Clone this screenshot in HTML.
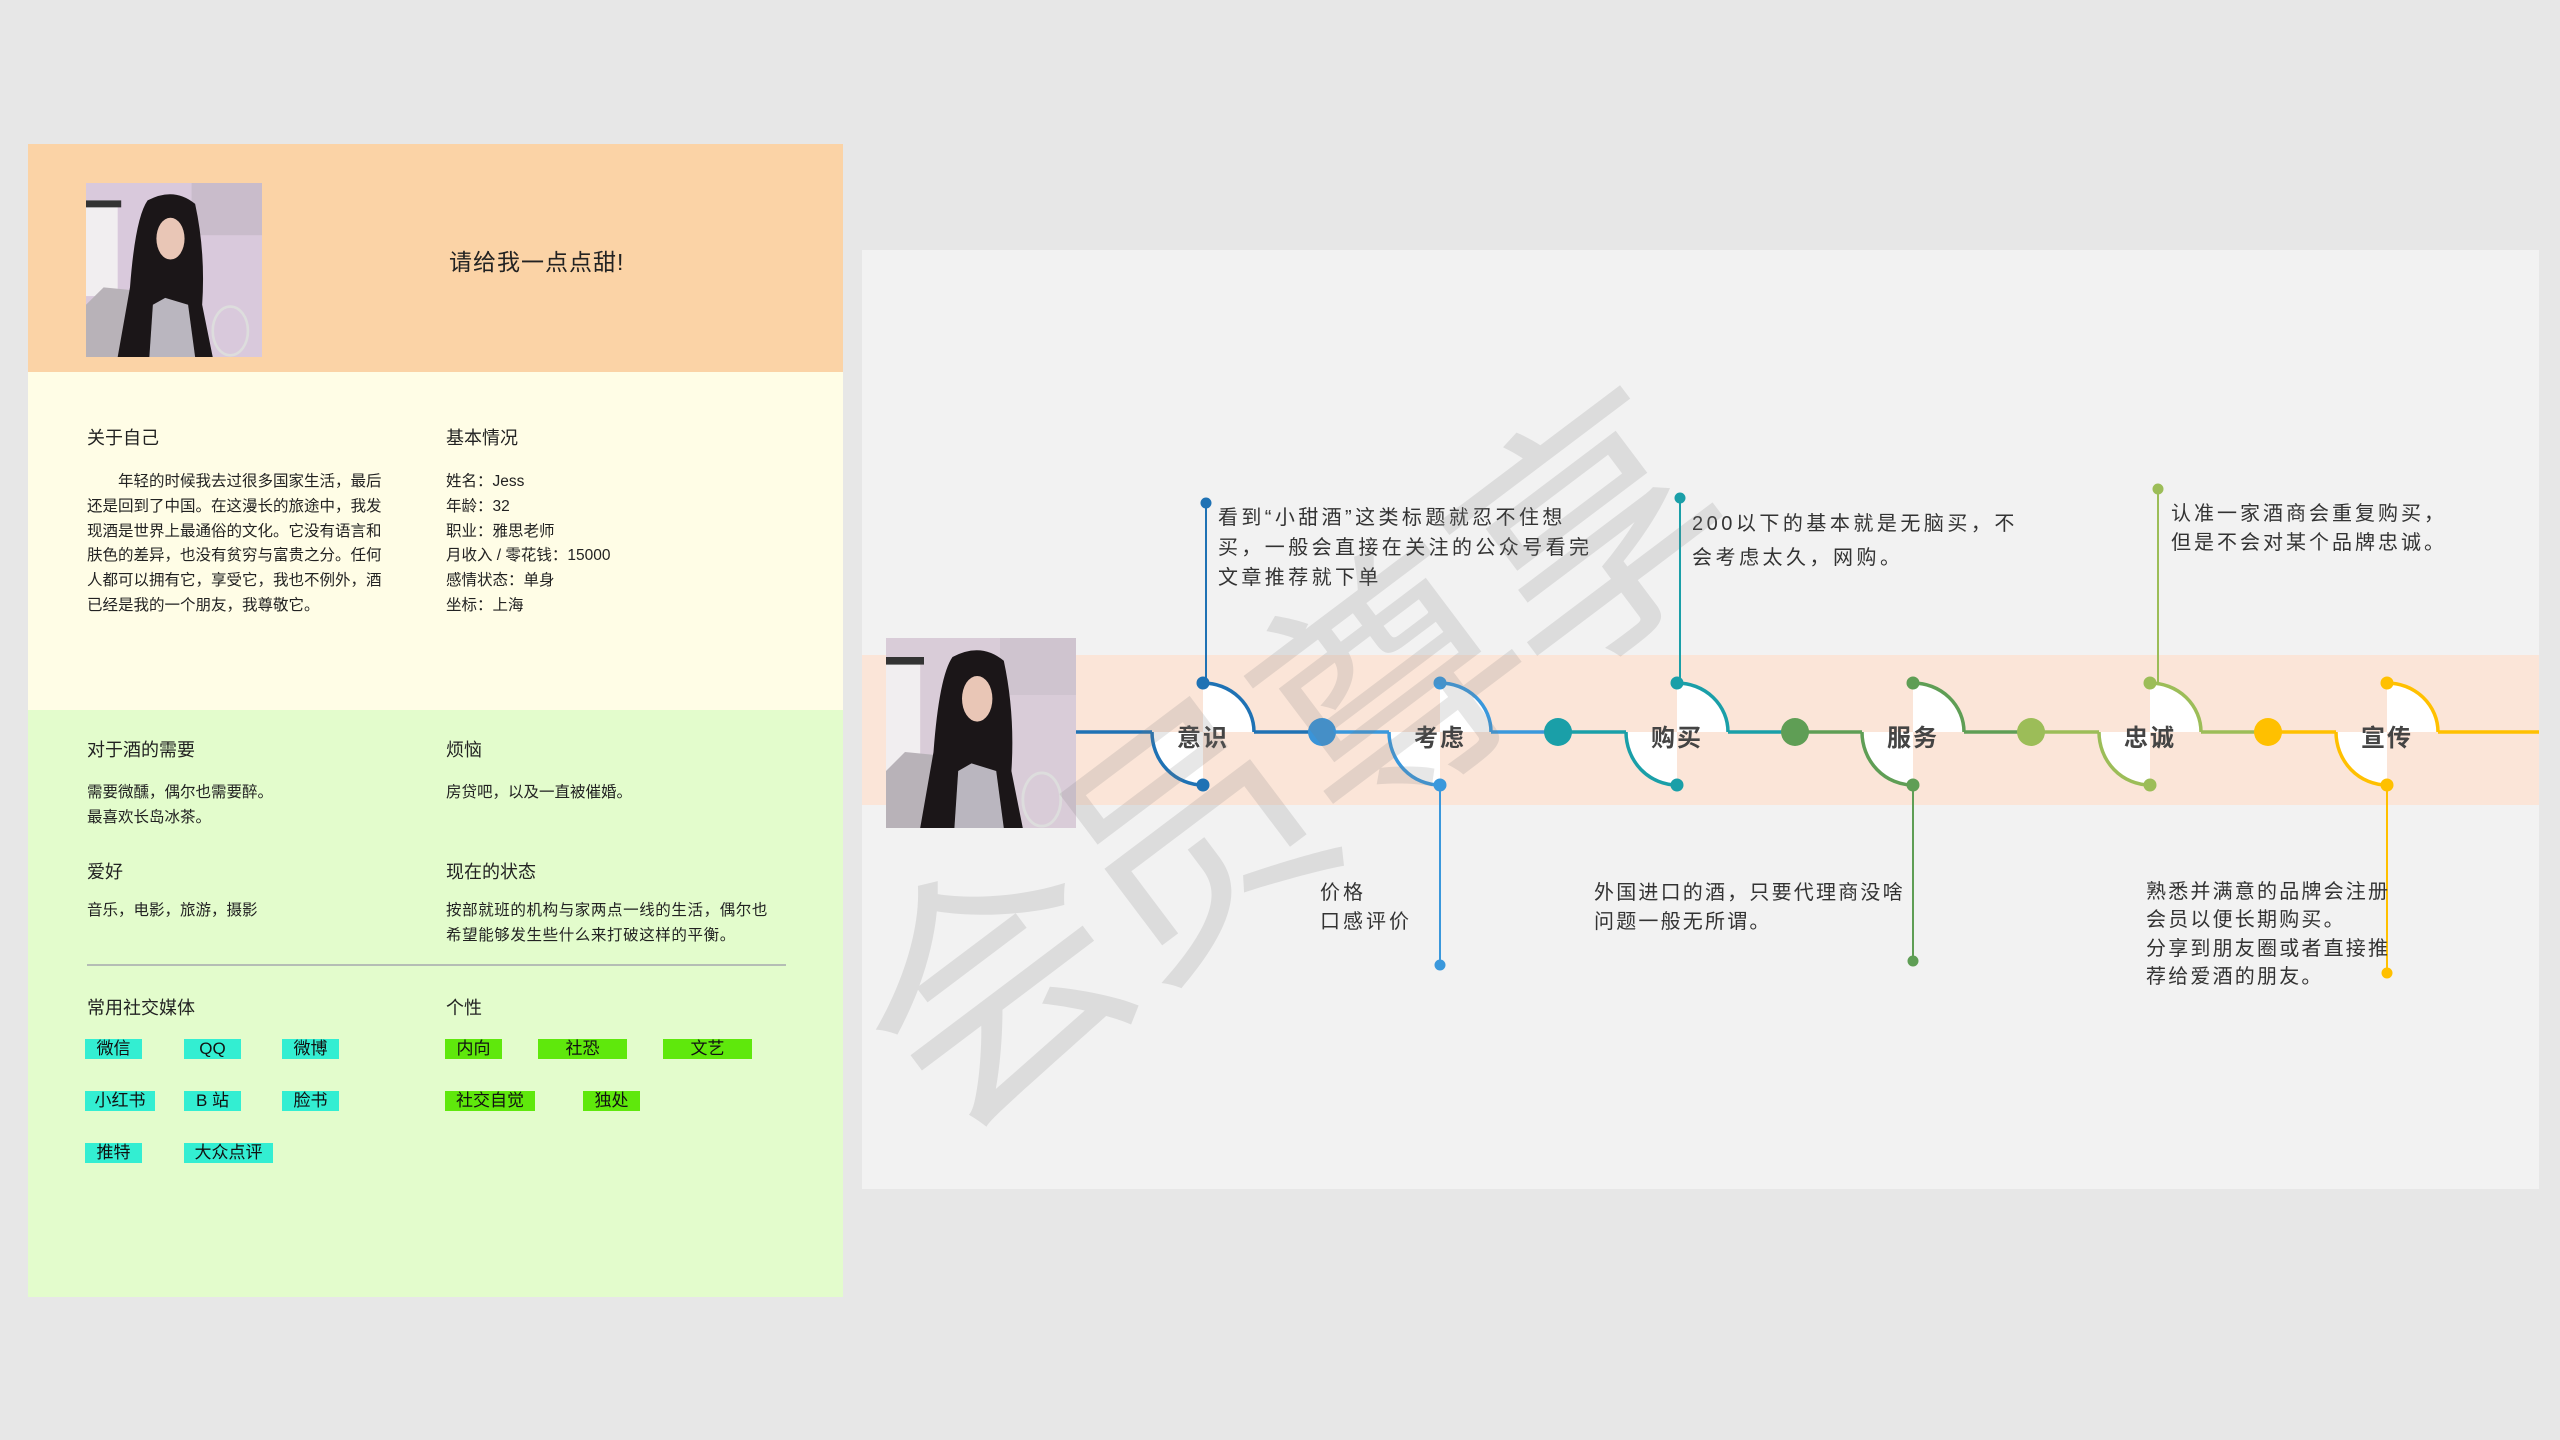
<!DOCTYPE html>
<html><head><meta charset="utf-8"><style>
*{margin:0;padding:0;box-sizing:border-box}
body{width:2560px;height:1440px;background:#e7e7e7;position:relative;overflow:hidden;font-family:"Liberation Sans","Noto Sans CJK SC",sans-serif;color:#222}
.a{position:absolute;white-space:nowrap}
.h{font-size:18px;color:#222}
.t{font-size:15.5px;line-height:24.8px;color:#222}
.tag{position:absolute;height:20px;font-size:17px;line-height:20px;text-align:center;color:#111}
.c{background:#33eed2}.g{background:#5fe80c}
.tl{position:absolute;font-size:20px;letter-spacing:3px;color:#333;white-space:nowrap}
.lbl{position:absolute;font-size:24px;font-weight:bold;color:#444;width:100px;text-align:center;top:718px;letter-spacing:2px}
</style></head><body>
<div class="a" style="left:28px;top:144px;width:815px;height:228px;background:#fbd3a6"></div>
<div class="a" style="left:28px;top:372px;width:815px;height:338px;background:#fffde6"></div>
<div class="a" style="left:28px;top:710px;width:815px;height:587px;background:#e3fccc"></div>

<svg class="a" style="left:86px;top:183px" width="176" height="174" viewBox="0 0 100 100" preserveAspectRatio="none">
<rect width="100" height="100" fill="#d9c9dc"/>
<rect x="0" y="10" width="18" height="55" fill="#f1eef0"/>
<rect x="0" y="10" width="20" height="4" fill="#333"/>
<rect x="60" y="0" width="40" height="30" fill="#c9bccb"/>
<path d="M0 70 L10 60 L30 62 L30 100 L0 100Z" fill="#b8b2b8"/>
<path d="M35 10 Q50 2 62 12 Q68 40 66 70 L72 100 L18 100 L25 60 Q28 20 35 10Z" fill="#1b1618"/>
<ellipse cx="48" cy="32" rx="8" ry="12" fill="#e9c6b6"/>
<path d="M38 70 L45 66 L58 70 L62 100 L36 100Z" fill="#bab6bf"/>
<ellipse cx="82" cy="85" rx="10" ry="14" fill="none" stroke="#ddd" stroke-width="1.5"/>
</svg>
<div class="a" style="left:449px;top:243px;font-size:23px;letter-spacing:1px">请给我一点点甜!</div>

<div class="a h" style="left:87px;top:424px">关于自己</div>
<div class="a h" style="left:446px;top:424px">基本情况</div>
<div class="a t" style="left:87px;top:470px">　　年轻的时候我去过很多国家生活，最后<br>还是回到了中国。在这漫长的旅途中，我发<br>现酒是世界上最通俗的文化。它没有语言和<br>肤色的差异，也没有贫穷与富贵之分。任何<br>人都可以拥有它，享受它，我也不例外，酒<br>已经是我的一个朋友，我尊敬它。</div>
<div class="a t" style="left:446px;top:470px">姓名：Jess<br>年龄：32<br>职业：雅思老师<br>月收入 / 零花钱：15000<br>感情状态：单身<br>坐标：上海</div>

<div class="a h" style="left:87px;top:736px">对于酒的需要</div>
<div class="a h" style="left:446px;top:736px">烦恼</div>
<div class="a t" style="left:87px;top:781px">需要微醺，偶尔也需要醉。<br>最喜欢长岛冰茶。</div>
<div class="a t" style="left:446px;top:781px">房贷吧，以及一直被催婚。</div>
<div class="a h" style="left:87px;top:858px">爱好</div>
<div class="a h" style="left:446px;top:858px">现在的状态</div>
<div class="a t" style="left:87px;top:899px">音乐，电影，旅游，摄影</div>
<div class="a t" style="left:446px;top:899px;letter-spacing:0.6px">按部就班的机构与家两点一线的生活，偶尔也<br>希望能够发生些什么来打破这样的平衡。</div>
<div class="a" style="left:87px;top:964px;width:699px;height:2px;background:#b5bdb5"></div>
<div class="a h" style="left:87px;top:994px">常用社交媒体</div>
<div class="a h" style="left:446px;top:994px">个性</div>

<div class="tag c" style="left:85px;top:1039px;width:57px">微信</div>
<div class="tag c" style="left:184px;top:1039px;width:57px">QQ</div>
<div class="tag c" style="left:282px;top:1039px;width:57px">微博</div>
<div class="tag c" style="left:85px;top:1091px;width:70px">小红书</div>
<div class="tag c" style="left:184px;top:1091px;width:57px">B 站</div>
<div class="tag c" style="left:282px;top:1091px;width:57px">脸书</div>
<div class="tag c" style="left:85px;top:1143px;width:57px">推特</div>
<div class="tag c" style="left:184px;top:1143px;width:89px">大众点评</div>
<div class="tag g" style="left:445px;top:1039px;width:57px">内向</div>
<div class="tag g" style="left:538px;top:1039px;width:89px">社恐</div>
<div class="tag g" style="left:663px;top:1039px;width:89px">文艺</div>
<div class="tag g" style="left:445px;top:1091px;width:90px">社交自觉</div>
<div class="tag g" style="left:583px;top:1091px;width:57px">独处</div>

<div class="a" style="left:862px;top:250px;width:1677px;height:939px;background:#f2f2f2"></div>
<div class="a" style="left:862px;top:655px;width:1677px;height:150px;background:#fbe5d8"></div>
<svg class="a" style="left:886px;top:638px" width="190" height="190" viewBox="0 0 100 100" preserveAspectRatio="none">
<rect width="100" height="100" fill="#d9ccd8"/>
<rect x="0" y="10" width="18" height="60" fill="#f1eef0"/>
<rect x="0" y="10" width="20" height="4" fill="#333"/>
<rect x="60" y="0" width="40" height="30" fill="#cfc4cf"/>
<path d="M0 70 L10 60 L30 62 L30 100 L0 100Z" fill="#b8b2b8"/>
<path d="M35 10 Q50 2 62 12 Q68 40 66 70 L72 100 L18 100 L25 60 Q28 20 35 10Z" fill="#1b1618"/>
<ellipse cx="48" cy="32" rx="8" ry="12" fill="#e9c6b6"/>
<path d="M38 70 L45 66 L58 70 L62 100 L36 100Z" fill="#bab6bf"/>
<ellipse cx="82" cy="85" rx="10" ry="14" fill="none" stroke="#ddd" stroke-width="1.5"/>
</svg>

<svg class="a" style="left:0;top:0" width="2560" height="1440">
<g stroke-width="3.5" fill="none">
<line x1="1076" y1="732" x2="1152" y2="732" stroke="#1f72b4"/>
<line x1="1254" y1="732" x2="1322" y2="732" stroke="#1f72b4"/>
<line x1="1322" y1="732" x2="1389" y2="732" stroke="#3a98dc"/>
<line x1="1491" y1="732" x2="1558" y2="732" stroke="#3a98dc"/>
<line x1="1558" y1="732" x2="1626" y2="732" stroke="#1a9fa8"/>
<line x1="1728" y1="732" x2="1795" y2="732" stroke="#1a9fa8"/>
<line x1="1795" y1="732" x2="1862" y2="732" stroke="#5f9e55"/>
<line x1="1964" y1="732" x2="2031" y2="732" stroke="#5f9e55"/>
<line x1="2031" y1="732" x2="2099" y2="732" stroke="#9cbd58"/>
<line x1="2201" y1="732" x2="2268" y2="732" stroke="#9cbd58"/>
<line x1="2268" y1="732" x2="2336" y2="732" stroke="#ffc000"/>
<line x1="2438" y1="732" x2="2539" y2="732" stroke="#ffc000"/>
</g>
<g stroke="#1f72b4" fill="#1f72b4"><path d="M1203 732 L1203 683 A51 49 0 0 1 1254 732Z M1203 732 L1152 732 A51 53 0 0 0 1203 785Z" fill="#fff" stroke="none"/><path d="M1203 683 A51 49 0 0 1 1254 732 M1152 732 A51 53 0 0 0 1203 785" fill="none" stroke-width="3.5"/><circle cx="1203" cy="683" r="6"/><circle cx="1203" cy="785" r="6"/><line x1="1206" y1="683" x2="1206" y2="503" stroke-width="2"/><circle cx="1206" cy="503" r="5"/></g>
<g stroke="#3a98dc" fill="#3a98dc"><path d="M1440 732 L1440 683 A51 49 0 0 1 1491 732Z M1440 732 L1389 732 A51 53 0 0 0 1440 785Z" fill="#fff" stroke="none"/><path d="M1440 683 A51 49 0 0 1 1491 732 M1389 732 A51 53 0 0 0 1440 785" fill="none" stroke-width="3.5"/><circle cx="1440" cy="683" r="6"/><circle cx="1440" cy="785" r="6"/><line x1="1440" y1="785" x2="1440" y2="965" stroke-width="2"/><circle cx="1440" cy="965" r="5"/></g>
<g stroke="#1a9fa8" fill="#1a9fa8"><path d="M1677 732 L1677 683 A51 49 0 0 1 1728 732Z M1677 732 L1626 732 A51 53 0 0 0 1677 785Z" fill="#fff" stroke="none"/><path d="M1677 683 A51 49 0 0 1 1728 732 M1626 732 A51 53 0 0 0 1677 785" fill="none" stroke-width="3.5"/><circle cx="1677" cy="683" r="6"/><circle cx="1677" cy="785" r="6"/><line x1="1680" y1="683" x2="1680" y2="498" stroke-width="2"/><circle cx="1680" cy="498" r="5"/></g>
<g stroke="#5f9e55" fill="#5f9e55"><path d="M1913 732 L1913 683 A51 49 0 0 1 1964 732Z M1913 732 L1862 732 A51 53 0 0 0 1913 785Z" fill="#fff" stroke="none"/><path d="M1913 683 A51 49 0 0 1 1964 732 M1862 732 A51 53 0 0 0 1913 785" fill="none" stroke-width="3.5"/><circle cx="1913" cy="683" r="6"/><circle cx="1913" cy="785" r="6"/><line x1="1913" y1="785" x2="1913" y2="961" stroke-width="2"/><circle cx="1913" cy="961" r="5"/></g>
<g stroke="#9cbd58" fill="#9cbd58"><path d="M2150 732 L2150 683 A51 49 0 0 1 2201 732Z M2150 732 L2099 732 A51 53 0 0 0 2150 785Z" fill="#fff" stroke="none"/><path d="M2150 683 A51 49 0 0 1 2201 732 M2099 732 A51 53 0 0 0 2150 785" fill="none" stroke-width="3.5"/><circle cx="2150" cy="683" r="6"/><circle cx="2150" cy="785" r="6"/><line x1="2158" y1="683" x2="2158" y2="489" stroke-width="2"/><circle cx="2158" cy="489" r="5"/></g>
<g stroke="#ffc000" fill="#ffc000"><path d="M2387 732 L2387 683 A51 49 0 0 1 2438 732Z M2387 732 L2336 732 A51 53 0 0 0 2387 785Z" fill="#fff" stroke="none"/><path d="M2387 683 A51 49 0 0 1 2438 732 M2336 732 A51 53 0 0 0 2387 785" fill="none" stroke-width="3.5"/><circle cx="2387" cy="683" r="6"/><circle cx="2387" cy="785" r="6"/><line x1="2387" y1="785" x2="2387" y2="973" stroke-width="2"/><circle cx="2387" cy="973" r="5"/></g>
<circle cx="1322" cy="732" r="14" fill="#3a94d8"/>
<circle cx="1558" cy="732" r="14" fill="#1a9fa8"/>
<circle cx="1795" cy="732" r="14" fill="#5f9e55"/>
<circle cx="2031" cy="732" r="14" fill="#9cbd58"/>
<circle cx="2268" cy="732" r="14" fill="#ffc000"/>
</svg>

<div class="lbl" style="left:1153px">意识</div>
<div class="lbl" style="left:1390px">考虑</div>
<div class="lbl" style="left:1627px">购买</div>
<div class="lbl" style="left:1863px">服务</div>
<div class="lbl" style="left:2100px">忠诚</div>
<div class="lbl" style="left:2337px">宣传</div>

<div class="tl" style="left:1218px;top:503px;line-height:30px;letter-spacing:3.4px">看到“小甜酒”这类标题就忍不住想<br>买，一般会直接在关注的公众号看完<br>文章推荐就下单</div>
<div class="tl" style="left:1692px;top:507px;line-height:34px;letter-spacing:3.5px">200以下的基本就是无脑买，不<br>会考虑太久，网购。</div>
<div class="tl" style="left:2171px;top:500px;line-height:29px">认准一家酒商会重复购买，<br>但是不会对某个品牌忠诚。</div>
<div class="tl" style="left:1320px;top:879px;line-height:29px">价格<br>口感评价</div>
<div class="tl" style="left:1594px;top:879px;line-height:29px;letter-spacing:2.2px">外国进口的酒，只要代理商没啥<br>问题一般无所谓。</div>
<div class="tl" style="left:2146px;top:878px;line-height:28.3px;letter-spacing:2.2px">熟悉并满意的品牌会注册<br>会员以便长期购买。<br>分享到朋友圈或者直接推<br>荐给爱酒的朋友。</div>

<div class="a" style="left:770px;top:600px;font-size:260px;line-height:260px;color:rgba(120,120,120,0.18);transform:rotate(-37deg);transform-origin:center;font-family:'Noto Sans CJK SC',sans-serif;width:1060px;letter-spacing:-10px">会员尊享</div>
</body></html>
